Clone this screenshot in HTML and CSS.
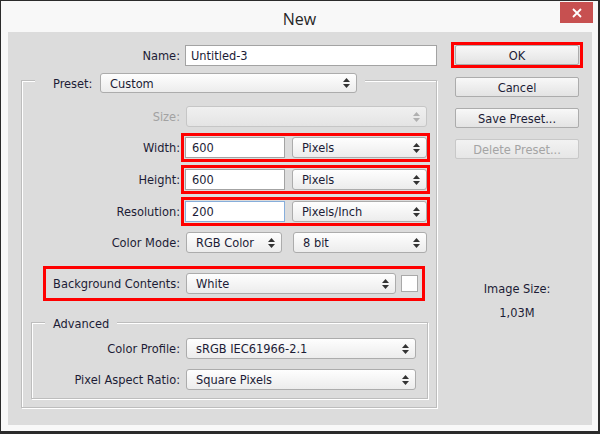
FILE: index.html
```html
<!DOCTYPE html>
<html>
<head>
<meta charset="utf-8">
<link rel="stylesheet" href="styles.css">
</head>
<body>
<div class="window">
  <div class="titlebar">
    <span></span>
    <span class="title">New</span>
    <span class="close"><svg width="10" height="10" viewBox="0 0 10 10"><path d="M1 1L9 9M9 1L1 9" stroke="#fff" stroke-width="1.8"/></svg></span>
  </div>
  <div class="panel">
    <div class="left">
      <div class="row">
        <span class="lbl lbl-name">Name:</span>
        <div class="inp w-name">Untitled-3</div>
      </div>
      <div class="group outer">
        <div class="ghead preset-head">
          <span class="preset-lbl">Preset:</span>
          <div class="sel w-preset"><span>Custom</span><svg class="arr" width="7" height="10" viewBox="0 0 7 10"><path d="M0 4L3.5 0L7 4Z M0 6L3.5 10L7 6Z" fill="#333"/></svg></div>
        </div>
        <div class="row size-row">
          <span class="lbl lbl-g dis">Size:</span>
          <div class="sel dis w-full"><span></span><svg class="arr" width="7" height="10" viewBox="0 0 7 10"><path d="M0 4L3.5 0L7 4Z M0 6L3.5 10L7 6Z" fill="#b0b0b0"/></svg></div>
        </div>
        <div class="row red-row first-red">
          <span class="lbl lbl-g">Width:</span>
          <div class="red">
            <div class="inp w-num">600</div>
            <div class="sel w-unit"><span>Pixels</span><svg class="arr" width="7" height="10" viewBox="0 0 7 10"><path d="M0 4L3.5 0L7 4Z M0 6L3.5 10L7 6Z" fill="#333"/></svg></div>
          </div>
        </div>
        <div class="row red-row">
          <span class="lbl lbl-g">Height:</span>
          <div class="red">
            <div class="inp w-num">600</div>
            <div class="sel w-unit"><span>Pixels</span><svg class="arr" width="7" height="10" viewBox="0 0 7 10"><path d="M0 4L3.5 0L7 4Z M0 6L3.5 10L7 6Z" fill="#333"/></svg></div>
          </div>
        </div>
        <div class="row red-row">
          <span class="lbl lbl-g">Resolution:</span>
          <div class="red">
            <div class="inp w-num focus">200</div>
            <div class="sel w-unit"><span>Pixels/Inch</span><svg class="arr" width="7" height="10" viewBox="0 0 7 10"><path d="M0 4L3.5 0L7 4Z M0 6L3.5 10L7 6Z" fill="#333"/></svg></div>
          </div>
        </div>
        <div class="row mode-row">
          <span class="lbl lbl-g">Color Mode:</span>
          <div class="sel w-mode"><span>RGB Color</span><svg class="arr" width="7" height="10" viewBox="0 0 7 10"><path d="M0 4L3.5 0L7 4Z M0 6L3.5 10L7 6Z" fill="#333"/></svg></div>
          <div class="sel w-bit"><span>8 bit</span><svg class="arr" width="7" height="10" viewBox="0 0 7 10"><path d="M0 4L3.5 0L7 4Z M0 6L3.5 10L7 6Z" fill="#333"/></svg></div>
        </div>
        <div class="red bg-row">
          <span class="lbl lbl-bg">Background Contents:</span>
          <div class="sel w-bg"><span>White</span><svg class="arr" width="7" height="10" viewBox="0 0 7 10"><path d="M0 4L3.5 0L7 4Z M0 6L3.5 10L7 6Z" fill="#333"/></svg></div>
          <div class="swatch"></div>
        </div>
        <div class="group adv">
          <div class="ghead adv-head">Advanced</div>
          <div class="row cp-row">
            <span class="lbl lbl-a">Color Profile:</span>
            <div class="sel w-adv"><span>sRGB IEC61966-2.1</span><svg class="arr" width="7" height="10" viewBox="0 0 7 10"><path d="M0 4L3.5 0L7 4Z M0 6L3.5 10L7 6Z" fill="#333"/></svg></div>
          </div>
          <div class="row par-row">
            <span class="lbl lbl-a">Pixel Aspect Ratio:</span>
            <div class="sel w-adv"><span>Square Pixels</span><svg class="arr" width="7" height="10" viewBox="0 0 7 10"><path d="M0 4L3.5 0L7 4Z M0 6L3.5 10L7 6Z" fill="#333"/></svg></div>
          </div>
        </div>
      </div>
    </div>
    <div class="right">
      <div class="red ok-box"><div class="btn">OK</div></div>
      <div class="btn cancel">Cancel</div>
      <div class="btn gap">Save Preset...</div>
      <div class="btn gap dis-btn">Delete Preset...</div>
      <div class="info info-title">Image Size:</div>
      <div class="info info-val">1,03M</div>
    </div>
  </div>
</div>
</body>
</html>
```
FILE: styles.css
```css
body {
  margin: 0;
  width: 600px;
  height: 434px;
  overflow: hidden;
  background: #2b2b2b;
  font-family: "DejaVu Sans Condensed", "DejaVu Sans", sans-serif;
  font-size: 12.7px;
  color: #1c1c36;
}
.window {
  margin: 1px 2px 0 1px;
  width: 597px;
  height: 430px;
  background: #f8f8f8;
  display: flex;
  flex-direction: column;
}
.titlebar {
  height: 31px;
  flex: none;
  display: grid;
  grid-template-columns: 1fr auto 1fr;
  align-items: start;
}
.title {
  font-family: "Open Sans", "Noto Sans", sans-serif;
  font-size: 16px;
  line-height: 20px;
  margin-top: 8px;
  color: #262626;
}
.close {
  justify-self: end;
  width: 33px;
  height: 21px;
  margin-top: 1px;
  margin-right: 5px;
  background: #c75050;
  display: flex;
  align-items: center;
  justify-content: center;
}
.panel {
  margin: 0 6px 0 7px;
  height: 393px;
  background: #dcdcdc;
  display: flex;
  padding-top: 13px;
  box-sizing: border-box;
}
.left { width: 429px; flex: none; }
.right {
  margin-left: 14px;
  margin-top: -3px;
  width: 132px;
  flex: none;
  display: flex;
  flex-direction: column;
  align-items: center;
}
.row { display: flex; align-items: center; }
.lbl { text-align: right; flex: none; line-height: 16px; white-space: nowrap; }
.lbl-name { width: 172px; margin-right: 5px; }
.lbl-g { width: 158px; margin-right: 6px; }
.red-row .lbl-g { margin-right: 1px; }
.lbl-bg { width: 127px; margin-right: 6px; }
.lbl-a { width: 148px; margin-right: 6px; }
.dis { color: #a2a2a2; }

.inp {
  height: 21px;
  box-sizing: border-box;
  border: 1px solid #a3a3a3;
  background: #fff;
  padding-left: 5px;
  display: flex;
  align-items: center;
  flex: none;
}
.inp.focus { border-color: #87aedb; }
.sel {
  height: 21px;
  box-sizing: border-box;
  border: 1px solid #acacac;
  border-radius: 3px;
  background: linear-gradient(#fefefe, #ececec);
  padding-left: 9px;
  display: flex;
  align-items: center;
  flex: none;
}
.sel.dis { background: linear-gradient(#f0f0f0, #e4e4e4); border-color: #c6c6c6; }
.arr { margin-left: auto; margin-right: 6px; flex: none; }

.w-name { width: 252px; }
.w-preset { width: 257px; height: 20px; }
.w-full { width: 241px; }
.w-num { width: 100px; padding-left: 6px; }
.w-unit { width: 135px; }
.w-mode { width: 96px; }
.w-bit { width: 134px; margin-left: 11px; }
.w-bg { width: 210px; }
.w-adv { width: 230px; }

.group {
  box-sizing: border-box;
  border: 1px solid #bdbdbd;
  box-shadow: 1px 1px 0 #fff, inset 1px 1px 0 #fff;
}
.outer {
  margin-top: 14px;
  margin-left: 13px;
  width: 416px;
  padding-bottom: 8px;
}
.ghead {
  display: flex;
  align-items: center;
  width: max-content;
  background: #dcdcdc;
}
.preset-head {
  height: 20px;
  margin: -8px 0 0 13px;
  padding: 0 8px 0 18px;
}
.preset-lbl { width: 47px; }
.size-row { margin-top: 13px; }
.red-row { margin-top: 3px; }
.red-row.first-red { margin-top: 6px; }
.red {
  display: flex;
  align-items: center;
  border: 3px solid #ff0000;
  flex: none;
}
.red-row .red { gap: 7px; padding: 1px 0 1px 1px; }
.mode-row { margin-top: 6px; }
.bg-row {
  width: max-content;
  margin: 13px 0 0 21px;
  padding: 4px 4px 4px 7px;
}
.swatch {
  width: 17px;
  height: 17px;
  box-sizing: border-box;
  margin-left: 5px;
  background: #fff;
  border: 1px solid #a9a9a9;
}
.adv {
  margin-top: 21px;
  margin-left: 9px;
  width: 397px;
  padding-bottom: 8px;
}
.adv-head {
  height: 16px;
  line-height: 16px;
  margin: -7px 0 0 13px;
  padding: 0 8px;
}
.cp-row { margin-top: 6px; }
.par-row { margin-top: 10px; }

.btn {
  width: 124px;
  height: 20px;
  box-sizing: border-box;
  border: 1px solid #acacac;
  border-radius: 2px;
  background: linear-gradient(#f8f8f8, #e3e3e3);
  display: flex;
  align-items: center;
  justify-content: center;
  flex: none;
}
.ok-box { padding: 0 1px; }
.cancel { margin-top: 9px; }
.gap { margin-top: 11px; }
.dis-btn { color: #a4a4a4; border-color: #c8c8c8; background: linear-gradient(#f2f2f2, #e6e6e6); }
.info { line-height: 16px; text-align: center; }
.info-title { margin-top: 122px; }
.info-val { margin-top: 8px; }
```
